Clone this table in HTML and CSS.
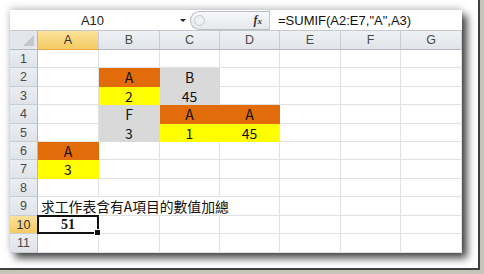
FILE: index.html
```html
<!DOCTYPE html>
<html>
<head>
<meta charset="utf-8">
<link rel="stylesheet" href="styles.css">
</head>
<body>
<div class="frame">
  <div class="sheet">
    <div class="fbar">
      <div class="namebox"><span class="name">A10</span><span class="dd"></span></div>
      <div class="pill"><span class="knob"></span><span class="fx">f<small>x</small></span></div>
      <div class="formula">=SUMIF(A2:E7,"A",A3)</div>
    </div>
    <div class="grid">
      <div class="corner"><span class="tri"></span></div>
      <div class="ch sel">A</div><div class="ch">B</div><div class="ch">C</div><div class="ch">D</div><div class="ch">E</div><div class="ch">F</div><div class="ch">G</div>

      <div class="rh">1</div><div class="c"></div><div class="c"></div><div class="c"></div><div class="c"></div><div class="c"></div><div class="c"></div><div class="c"></div>
      <div class="rh">2</div><div class="c"></div><div class="c or">A</div><div class="c gr">B</div><div class="c"></div><div class="c"></div><div class="c"></div><div class="c"></div>
      <div class="rh">3</div><div class="c"></div><div class="c ye">2</div><div class="c gr">45</div><div class="c"></div><div class="c"></div><div class="c"></div><div class="c"></div>
      <div class="rh">4</div><div class="c"></div><div class="c gr">F</div><div class="c or">A</div><div class="c or">A</div><div class="c"></div><div class="c"></div><div class="c"></div>
      <div class="rh">5</div><div class="c"></div><div class="c gr">3</div><div class="c ye">1</div><div class="c ye">45</div><div class="c"></div><div class="c"></div><div class="c"></div>
      <div class="rh">6</div><div class="c or">A</div><div class="c"></div><div class="c"></div><div class="c"></div><div class="c"></div><div class="c"></div><div class="c"></div>
      <div class="rh">7</div><div class="c ye">3</div><div class="c"></div><div class="c"></div><div class="c"></div><div class="c"></div><div class="c"></div><div class="c"></div>
      <div class="rh">8</div><div class="c"></div><div class="c"></div><div class="c"></div><div class="c"></div><div class="c"></div><div class="c"></div><div class="c"></div>
      <div class="rh">9</div><div class="c txt">求工作表含有A項目的數值加總</div><div class="c"></div><div class="c"></div><div class="c"></div>
      <div class="rh selr">10</div><div class="c active">51<span class="handle"></span></div><div class="c"></div><div class="c"></div><div class="c"></div><div class="c"></div><div class="c"></div><div class="c"></div>
      <div class="rh">11</div><div class="c"></div><div class="c"></div><div class="c"></div><div class="c"></div><div class="c"></div><div class="c"></div><div class="c"></div>
    </div>
  </div>
</div>
</body>
</html>
```

FILE: styles.css
```css
html, body {
  margin: 0;
  padding: 0;
}
body {
  width: 484px;
  height: 274px;
  background: #c4c5b6;
  overflow: hidden;
  font-family: "Noto Sans CJK TC", "Liberation Sans", sans-serif;
}
.frame {
  box-sizing: border-box;
  width: 480px;
  height: 270px;
  background: #ffffff;
  border-right: 2px solid #3f3f3c;
  border-bottom: 2px solid #3f3f3c;
  padding: 10px 0 0 10px;
}
.sheet {
  width: 452px;
  background: #fff;
  box-shadow: 5px 5px 8px rgba(0, 0, 0, 0.75), -1px -3px 6px rgba(0, 0, 0, 0.15);
}
.fbar {
  display: flex;
  height: 20px;
  border-bottom: 1px solid #c5c8cc;
  background: #fff;
}
.namebox {
  width: 180px;
  display: flex;
  align-items: center;
}
.name {
  width: 165px;
  text-align: center;
  font-family: "Liberation Sans", sans-serif;
  font-size: 13px;
  color: #222;
}
.dd {
  margin-left: 5px;
  width: 0;
  height: 0;
  border-left: 3px solid transparent;
  border-right: 3px solid transparent;
  border-top: 3px solid #222;
}
.pill {
  box-sizing: border-box;
  width: 79px;
  margin-top: 1px;
  height: 19px;
  background: linear-gradient(#f7f8f9, #e6e8eb);
  border: 1px solid #b9bdc3;
  border-right: none;
  border-radius: 10px 0 0 10px;
  display: flex;
  align-items: center;
  padding-left: 3px;
}
.knob {
  width: 9px;
  height: 9px;
  border-radius: 50%;
  border: 1px solid #c6c9cd;
  background: #eef0f2;
}
.fx {
  margin-left: auto;
  margin-right: 7px;
  font-family: "Liberation Serif", serif;
  font-style: italic;
  font-weight: bold;
  font-size: 12px;
  color: #333;
}
.fx small {
  font-size: 9px;
}
.formula {
  flex: 1;
  border-left: 1px solid #c5c8cc;
  padding-left: 8px;
  display: flex;
  align-items: center;
  font-family: "Liberation Sans", sans-serif;
  font-size: 13px;
  color: #111;
}
.grid {
  display: grid;
  grid-template-columns: 28px 61px 61px 60px 60px 61px 60px 61px;
  grid-template-rows: 19px 18px 19px 18px 19px 18px 18px 19px 18px 19px 18px 19px;
}
.grid > div {
  box-sizing: border-box;
  display: flex;
  align-items: center;
  justify-content: center;
}
.corner {
  background: #e3e7ec;
  border-right: 1px solid #b3b8bf;
  border-bottom: 1px solid #b3b8bf;
  position: relative;
}
.tri {
  position: absolute;
  right: 3px;
  bottom: 3px;
  width: 0;
  height: 0;
  border-left: 11px solid transparent;
  border-bottom: 11px solid #c3c8ce;
}
.ch {
  background: linear-gradient(#eef1f4, #e1e5ea);
  border-right: 1px solid #c8cdd3;
  border-bottom: 1px solid #b3b8bf;
  font-family: "Liberation Sans", sans-serif;
  font-size: 12.5px;
  color: #4a4a4a;
}
.rh {
  background: linear-gradient(#eaedf1, #e0e4e9);
  border-right: 1px solid #b3b8bf;
  border-bottom: 1px solid #c8cdd3;
  font-family: "Liberation Sans", sans-serif;
  font-size: 12.5px;
  color: #4a4a4a;
}
.ch.sel, .rh.selr {
  background: linear-gradient(#fbe19a, #f5cb62);
  color: #333;
}
.ch.sel {
  border-bottom: 1px solid #e9a53f;
}
.rh.selr {
  border-right: 1px solid #e9a53f;
}
.c {
  border-right: 1px solid #dfe1e3;
  border-bottom: 1px solid #dfe1e3;
  font-size: 14px;
  color: #111;
}
.c.or {
  background: #e36c0a;
  border-color: #e36c0a;
}
.c.ye {
  background: #ffff00;
  border-color: #ffff00;
}
.c.gr {
  background: #d9d9d9;
  border-color: #d9d9d9;
}
.c.txt {
  grid-column: span 4;
  justify-content: flex-start;
  padding-left: 3px;
  font-size: 13.8px;
  white-space: nowrap;
}
.c.active {
  position: relative;
  border: 2px solid #111;
  margin: -1px 0 0 -1px;
  font-family: "Liberation Serif", serif;
  font-weight: bold;
  font-size: 14px;
}
.handle {
  position: absolute;
  right: -4px;
  bottom: -4px;
  width: 5px;
  height: 5px;
  background: #111;
  border: 1px solid #fff;
}
```
